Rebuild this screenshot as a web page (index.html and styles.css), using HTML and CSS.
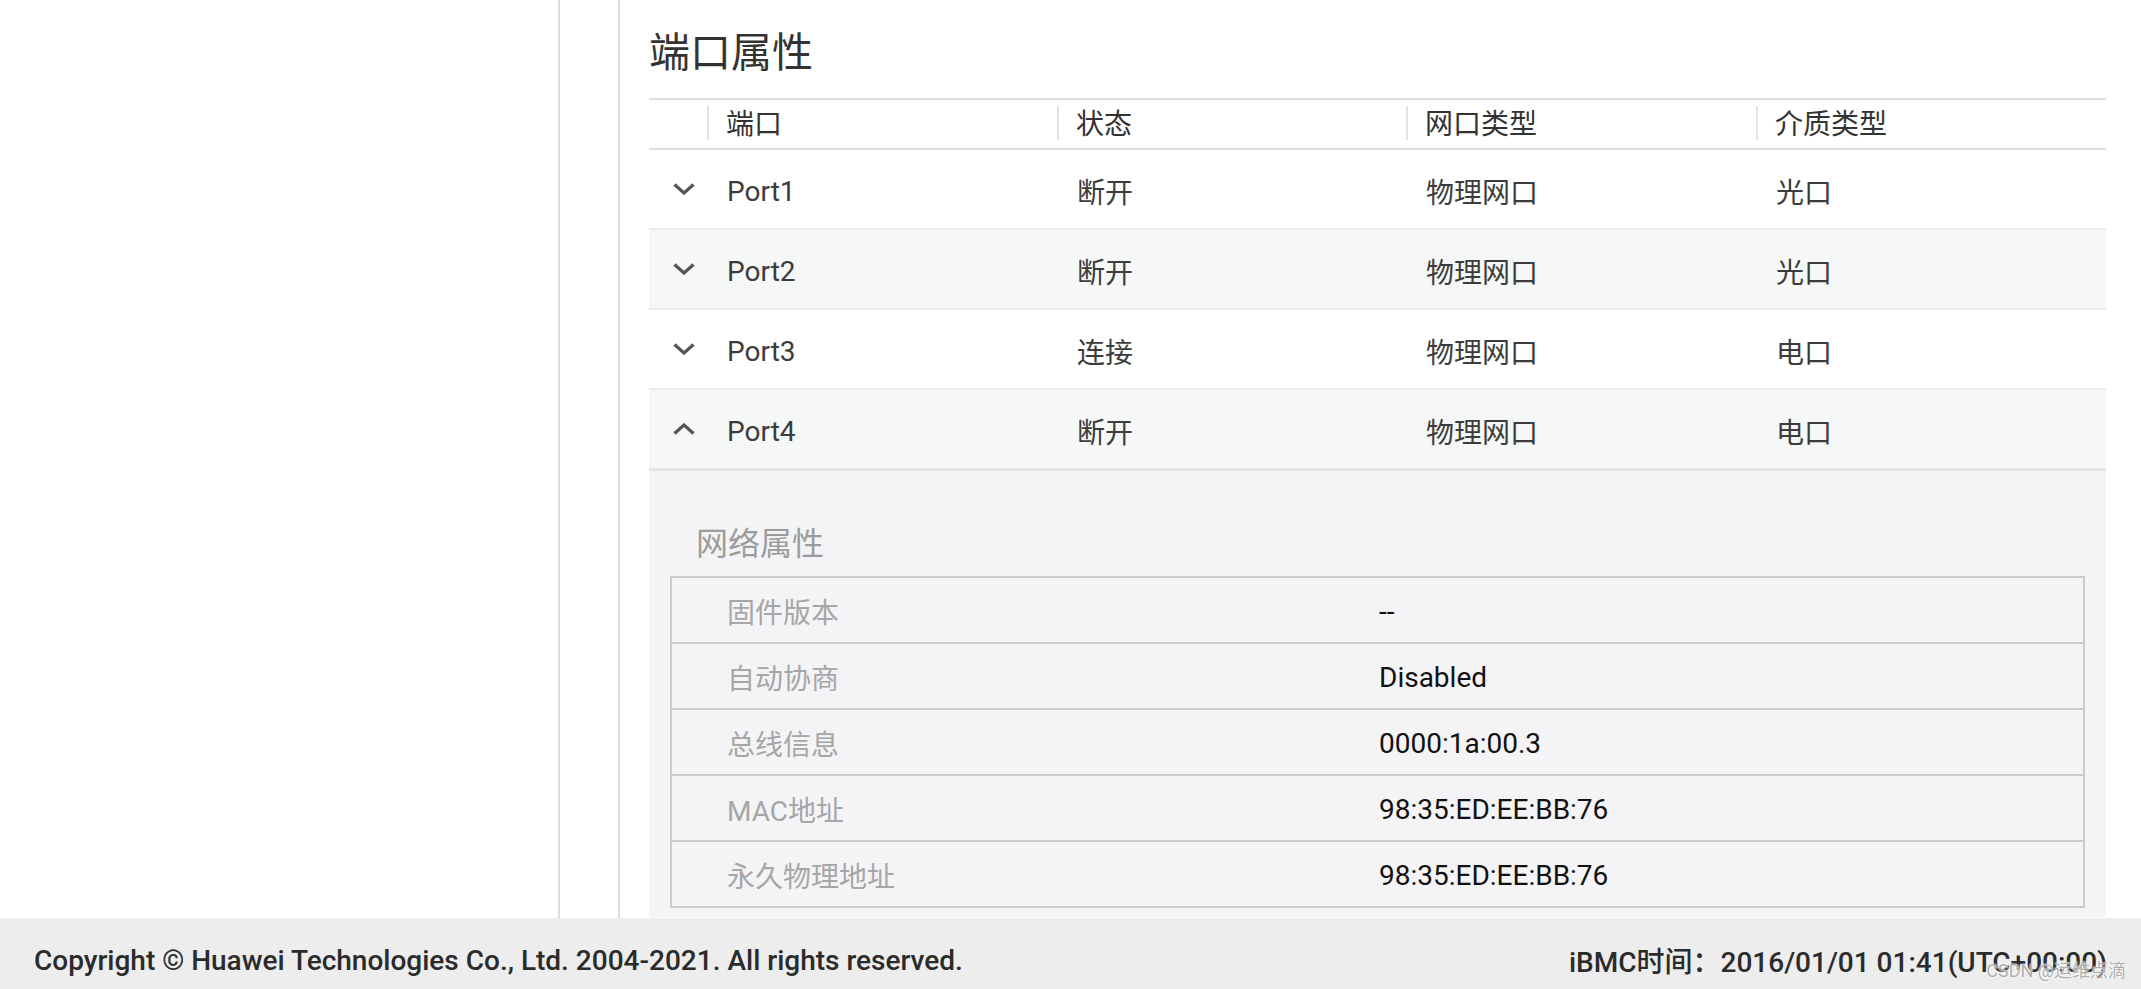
FILE: index.html
```html
<!DOCTYPE html>
<html>
<head>
    <title>端口属性 - iBMC</title>
    <link rel="stylesheet" href="styles.css">
</head>
<body>
    <div class="page">
        <div class="sidebar"></div>
        <div class="spacer"></div>
        <div class="content">
            <h1 class="title">端口属性</h1>
            <div class="ports">
                <div class="head">
                    <div class="cell toggle"></div>
                    <div class="cell">端口</div>
                    <div class="cell">状态</div>
                    <div class="cell">网口类型</div>
                    <div class="cell">介质类型</div>
                </div>

                <div class="row">
                    <div class="cell toggle">
                        <svg width="22" height="12" viewBox="0 0 22 12"><path d="M1.5 1.5 L11 10 L20.5 1.5" /></svg>
                    </div>
                    <div class="cell">Port1</div>
                    <div class="cell">断开</div>
                    <div class="cell">物理网口</div>
                    <div class="cell">光口</div>
                </div>
                <div class="row shaded">
                    <div class="cell toggle">
                        <svg width="22" height="12" viewBox="0 0 22 12"><path d="M1.5 1.5 L11 10 L20.5 1.5" /></svg>
                    </div>
                    <div class="cell">Port2</div>
                    <div class="cell">断开</div>
                    <div class="cell">物理网口</div>
                    <div class="cell">光口</div>
                </div>
                <div class="row">
                    <div class="cell toggle">
                        <svg width="22" height="12" viewBox="0 0 22 12"><path d="M1.5 1.5 L11 10 L20.5 1.5" /></svg>
                    </div>
                    <div class="cell">Port3</div>
                    <div class="cell">连接</div>
                    <div class="cell">物理网口</div>
                    <div class="cell">电口</div>
                </div>
                <div class="row shaded open">
                    <div class="cell toggle">
                        <svg width="22" height="12" viewBox="0 0 22 12"><path d="M1.5 10.5 L11 2 L20.5 10.5" /></svg>
                    </div>
                    <div class="cell">Port4</div>
                    <div class="cell">断开</div>
                    <div class="cell">物理网口</div>
                    <div class="cell">电口</div>
                </div>

                <div class="details">
                    <h2 class="subtitle">网络属性</h2>
                    <div class="props">
                        <div class="prop">
                            <div class="label">固件版本</div>
                            <div class="value">--</div>
                        </div>
                        <div class="prop">
                            <div class="label">自动协商</div>
                            <div class="value">Disabled</div>
                        </div>
                        <div class="prop">
                            <div class="label">总线信息</div>
                            <div class="value">0000:1a:00.3</div>
                        </div>
                        <div class="prop">
                            <div class="label">MAC地址</div>
                            <div class="value">98:35:ED:EE:BB:76</div>
                        </div>
                        <div class="prop">
                            <div class="label">永久物理地址</div>
                            <div class="value">98:35:ED:EE:BB:76</div>
                        </div>
                    </div>
                </div>
            </div>
        </div>
    </div>

    <div class="footer">
        <span>Copyright © Huawei Technologies Co., Ltd. 2004-2021. All rights reserved.</span>
        <span>iBMC时间：2016/01/01 01:41(UTC+00:00)</span>
        <span class="watermark">CSDN @运维点滴</span>
    </div>
</body>
</html>
```

FILE: styles.css
```css
body {
    margin: 0;
    font-family: Roboto, "Noto Sans CJK SC", sans-serif;
    color: #333;
    background: #fff;
}
.page {
    display: flex;
    height: 918px;
}
.sidebar {
    width: 558px;
    border-right: 2px solid #dcdcdc;
}
.spacer {
    width: 58px;
    border-right: 2px solid #dcdcdc;
}
.content {
    flex: 1;
    padding: 0 35px 0 29px;
}
.title {
    margin: 0;
    height: 98px;
    display: flex;
    align-items: center;
    font-size: 41px;
    font-weight: normal;
    color: #333;
}
.ports {
    border-top: 2px solid #dedede;
}
.head, .row {
    display: grid;
    grid-template-columns: 58px 350px 349px 350px 1fr;
}
.head {
    padding: 6px 0 8px;
    border-bottom: 2px solid #dedede;
    font-size: 28px;
}
.head .cell {
    box-sizing: border-box;
    height: 34px;
    padding: 4px 0 0 17px;
    line-height: 30px;
    border-left: 2px solid #e2e2e2;
}
.head .cell.toggle {
    border-left: none;
}
.row {
    height: 78px;
    align-items: center;
    border-bottom: 2px solid #ececec;
    font-size: 28px;
    color: #3c3c3c;
}
.row .cell {
    padding: 4px 0 0 20px;
}
.row .cell.toggle {
    padding: 0 0 0 24px;
    display: flex;
}
.row.shaded {
    background: #f6f7f7;
}
.row.open {
    border-bottom: 3px solid #e4e4e4;
}
.toggle svg path {
    fill: none;
    stroke: #555;
    stroke-width: 3.2;
}
.details {
    background: #f4f4f6;
    padding: 0 21px 9px;
}
.subtitle {
    margin: 0 0 14px;
    padding: 55px 0 0 26px;
    height: 36px;
    line-height: 36px;
    font-size: 32px;
    font-weight: normal;
    color: #9c9c9c;
}
.props {
    border: 2px solid #cbcbcd;
}
.prop {
    display: grid;
    grid-template-columns: 707px 1fr;
    box-sizing: border-box;
    height: 66px;
    padding-top: 2px;
    align-items: center;
    font-size: 28px;
    border-top: 2px solid #cbcbcd;
}
.prop:first-child {
    border-top: none;
    height: 64px;
}
.label {
    padding-left: 55px;
    color: #a6a6a6;
}
.value {
    color: #111;
}
.footer {
    position: relative;
    box-sizing: border-box;
    height: 71px;
    padding: 13px 34px 0;
    background: #ededed;
    display: flex;
    justify-content: space-between;
    align-items: center;
    font-size: 28px;
    font-weight: 500;
    color: #2b2b2b;
}
.watermark {
    position: absolute;
    right: 15px;
    bottom: 7px;
    font-size: 18px;
    font-weight: normal;
    color: rgba(160, 160, 160, 0.85);
    text-shadow: 0 0 2px #fff, 0 0 2px #fff;
}
```
